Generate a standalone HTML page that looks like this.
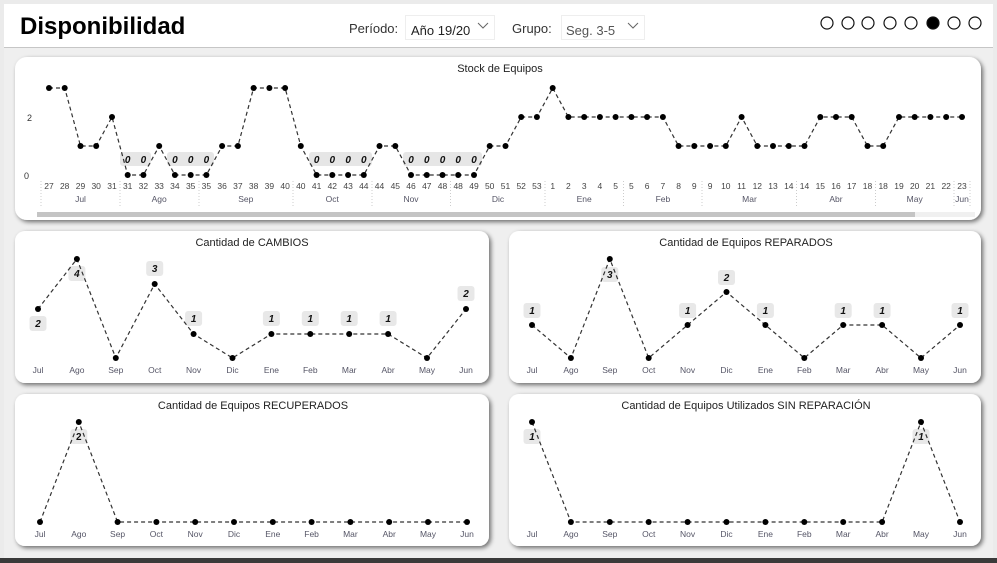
<!DOCTYPE html>
<html><head><meta charset="utf-8">
<style>
html,body{margin:0;padding:0;width:997px;height:563px;overflow:hidden;background:#e8e8e8;font-family:"Liberation Sans",sans-serif;}
svg text{font-family:"Liberation Sans",sans-serif;}
</style></head>
<body>
<svg width="997" height="563" viewBox="0 0 997 563" xmlns="http://www.w3.org/2000/svg">
<defs>
<filter id="sh" x="-5%" y="-10%" width="110%" height="125%">
<feGaussianBlur in="SourceAlpha" stdDeviation="2.5"/><feOffset dx="2" dy="2"/>
<feComponentTransfer><feFuncA type="linear" slope="0.55"/></feComponentTransfer>
<feMerge><feMergeNode/><feMergeNode in="SourceGraphic"/></feMerge></filter>
</defs>
<rect x="0" y="0" width="997" height="563" fill="#ebebeb"/>
<rect x="4" y="4" width="989" height="554" fill="#efefef"/>
<!-- header -->
<rect x="4" y="4" width="989" height="43" fill="#fff"/>
<line x1="4" y1="47.5" x2="993" y2="47.5" stroke="#c6c6c6"/>
<text x="20" y="34" font-size="24" font-weight="bold" fill="#000">Disponibilidad</text>
<text x="349" y="33" font-size="13" fill="#333">Período:</text>
<rect x="405.5" y="15.5" width="89" height="24" fill="#fff" stroke="#eee"/>
<text x="411" y="35" font-size="13" fill="#222">Año 19/20</text>
<path d="M478 23 l5 5 l5 -5" fill="none" stroke="#666"/>
<text x="512" y="33" font-size="13" fill="#333">Grupo:</text>
<rect x="561.5" y="15.5" width="83" height="24" fill="#fff" stroke="#eee"/>
<text x="566" y="35" font-size="13" fill="#555">Seg. 3-5</text>
<path d="M628 23 l5 5 l5 -5" fill="none" stroke="#666"/>
<g fill="#fff" stroke="#111" stroke-width="1.2">
<circle cx="827" cy="23" r="6"/><circle cx="848" cy="23" r="6"/><circle cx="868" cy="23" r="6"/><circle cx="890" cy="23" r="6"/><circle cx="911" cy="23" r="6"/><circle cx="933" cy="23" r="6" fill="#000"/><circle cx="954" cy="23" r="6"/><circle cx="975" cy="23" r="6"/>
</g>

<!-- cards -->
<g fill="#fff" filter="url(#sh)">
<rect x="15" y="57" width="966" height="163" rx="12"/>
<rect x="15" y="231" width="474" height="152" rx="10"/>
<rect x="509" y="231" width="472" height="152" rx="10"/>
<rect x="15" y="394" width="474" height="152" rx="10"/>
<rect x="509" y="394" width="472" height="152" rx="10"/>
</g>
<rect x="0" y="558" width="997" height="5" fill="#3a3a3a"/>

<!-- Stock chart -->
<text x="500" y="72" font-size="11" text-anchor="middle" fill="#222">Stock de Equipos</text>
<text x="27" y="121" font-size="9" fill="#333">2</text>
<text x="24" y="179" font-size="9" fill="#333">0</text>
<g fill="#e6e6e6">
<rect x="120" y="152" width="31" height="14" rx="3"/>
<rect x="167" y="152" width="47" height="14" rx="3"/>
<rect x="309" y="152" width="63" height="14" rx="3"/>
<rect x="403" y="152" width="79" height="14" rx="3"/>
</g>
<g font-size="10" font-weight="bold" font-style="italic" text-anchor="middle" fill="#111">
<text x="127.7" y="163">0</text><text x="143.4" y="163">0</text>
<text x="174.9" y="163">0</text><text x="190.7" y="163">0</text><text x="206.4" y="163">0</text>
<text x="316.6" y="163">0</text><text x="332.3" y="163">0</text><text x="348.1" y="163">0</text><text x="363.8" y="163">0</text>
<text x="411" y="163">0</text><text x="426.8" y="163">0</text><text x="442.5" y="163">0</text><text x="458.2" y="163">0</text><text x="474" y="163">0</text>
</g>
<polyline fill="none" stroke="#333" stroke-width="1.2" stroke-dasharray="4 3" points="49,88 64.7,88 80.5,146 96.2,146 112,117 127.7,175 143.4,175 159.2,146 174.9,175 190.7,175 206.4,175 222.1,146 237.9,146 253.6,88 269.4,88 285.1,88 300.8,146 316.6,175 332.3,175 348.1,175 363.8,175 379.5,146 395.3,146 411,175 426.8,175 442.5,175 458.2,175 474,175 489.7,146 505.5,146 521.2,117 536.9,117 552.7,88 568.4,117 584.2,117 599.9,117 615.6,117 631.4,117 647.1,117 662.9,117 678.6,146 694.3,146 710.1,146 725.8,146 741.6,117 757.3,146 773,146 788.8,146 804.5,146 820.3,117 836,117 851.7,117 867.5,146 883.2,146 899,117 914.7,117 930.4,117 946.2,117 962,117"/>
<g fill="#000">
<circle cx="49" cy="88" r="3"/><circle cx="64.7" cy="88" r="3"/><circle cx="80.5" cy="146" r="3"/><circle cx="96.2" cy="146" r="3"/><circle cx="112" cy="117" r="3"/><circle cx="127.7" cy="175" r="3"/><circle cx="143.4" cy="175" r="3"/><circle cx="159.2" cy="146" r="3"/><circle cx="174.9" cy="175" r="3"/><circle cx="190.7" cy="175" r="3"/><circle cx="206.4" cy="175" r="3"/><circle cx="222.1" cy="146" r="3"/><circle cx="237.9" cy="146" r="3"/><circle cx="253.6" cy="88" r="3"/><circle cx="269.4" cy="88" r="3"/><circle cx="285.1" cy="88" r="3"/><circle cx="300.8" cy="146" r="3"/><circle cx="316.6" cy="175" r="3"/><circle cx="332.3" cy="175" r="3"/><circle cx="348.1" cy="175" r="3"/><circle cx="363.8" cy="175" r="3"/><circle cx="379.5" cy="146" r="3"/><circle cx="395.3" cy="146" r="3"/><circle cx="411" cy="175" r="3"/><circle cx="426.8" cy="175" r="3"/><circle cx="442.5" cy="175" r="3"/><circle cx="458.2" cy="175" r="3"/><circle cx="474" cy="175" r="3"/><circle cx="489.7" cy="146" r="3"/><circle cx="505.5" cy="146" r="3"/><circle cx="521.2" cy="117" r="3"/><circle cx="536.9" cy="117" r="3"/><circle cx="552.7" cy="88" r="3"/><circle cx="568.4" cy="117" r="3"/><circle cx="584.2" cy="117" r="3"/><circle cx="599.9" cy="117" r="3"/><circle cx="615.6" cy="117" r="3"/><circle cx="631.4" cy="117" r="3"/><circle cx="647.1" cy="117" r="3"/><circle cx="662.9" cy="117" r="3"/><circle cx="678.6" cy="146" r="3"/><circle cx="694.3" cy="146" r="3"/><circle cx="710.1" cy="146" r="3"/><circle cx="725.8" cy="146" r="3"/><circle cx="741.6" cy="117" r="3"/><circle cx="757.3" cy="146" r="3"/><circle cx="773" cy="146" r="3"/><circle cx="788.8" cy="146" r="3"/><circle cx="804.5" cy="146" r="3"/><circle cx="820.3" cy="117" r="3"/><circle cx="836" cy="117" r="3"/><circle cx="851.7" cy="117" r="3"/><circle cx="867.5" cy="146" r="3"/><circle cx="883.2" cy="146" r="3"/><circle cx="899" cy="117" r="3"/><circle cx="914.7" cy="117" r="3"/><circle cx="930.4" cy="117" r="3"/><circle cx="946.2" cy="117" r="3"/><circle cx="962" cy="117" r="3"/>
</g>
<g font-size="8.5" fill="#444" text-anchor="middle">
<text x="49" y="189">27</text><text x="64.7" y="189">28</text><text x="80.5" y="189">29</text><text x="96.2" y="189">30</text><text x="112" y="189">31</text><text x="127.7" y="189">31</text><text x="143.4" y="189">32</text><text x="159.2" y="189">33</text><text x="174.9" y="189">34</text><text x="190.7" y="189">35</text><text x="206.4" y="189">35</text><text x="222.1" y="189">36</text><text x="237.9" y="189">37</text><text x="253.6" y="189">38</text><text x="269.4" y="189">39</text><text x="285.1" y="189">40</text><text x="300.8" y="189">40</text><text x="316.6" y="189">41</text><text x="332.3" y="189">42</text><text x="348.1" y="189">43</text><text x="363.8" y="189">44</text><text x="379.5" y="189">44</text><text x="395.3" y="189">45</text><text x="411" y="189">46</text><text x="426.8" y="189">47</text><text x="442.5" y="189">48</text><text x="458.2" y="189">48</text><text x="474" y="189">49</text><text x="489.7" y="189">50</text><text x="505.5" y="189">51</text><text x="521.2" y="189">52</text><text x="536.9" y="189">53</text><text x="552.7" y="189">1</text><text x="568.4" y="189">2</text><text x="584.2" y="189">3</text><text x="599.9" y="189">4</text><text x="615.6" y="189">5</text><text x="631.4" y="189">5</text><text x="647.1" y="189">6</text><text x="662.9" y="189">7</text><text x="678.6" y="189">8</text><text x="694.3" y="189">9</text><text x="710.1" y="189">9</text><text x="725.8" y="189">10</text><text x="741.6" y="189">11</text><text x="757.3" y="189">12</text><text x="773" y="189">13</text><text x="788.8" y="189">14</text><text x="804.5" y="189">14</text><text x="820.3" y="189">15</text><text x="836" y="189">16</text><text x="851.7" y="189">17</text><text x="867.5" y="189">18</text><text x="883.2" y="189">18</text><text x="899" y="189">19</text><text x="914.7" y="189">20</text><text x="930.4" y="189">21</text><text x="946.2" y="189">22</text><text x="962" y="189">23</text>
</g>
<g font-size="8.5" fill="#556" text-anchor="middle">
<text x="80.5" y="202">Jul</text><text x="159.2" y="202">Ago</text><text x="245.8" y="202">Sep</text><text x="332.3" y="202">Oct</text><text x="411" y="202">Nov</text><text x="498" y="202">Dic</text><text x="584.2" y="202">Ene</text><text x="662.9" y="202">Feb</text><text x="749.5" y="202">Mar</text><text x="836" y="202">Abr</text><text x="914.7" y="202">May</text><text x="962" y="202">Jun</text>
</g>
<g stroke="#ccc" stroke-dasharray="1 2">
<line x1="41" y1="181" x2="41" y2="207"/><line x1="120" y1="181" x2="120" y2="207"/><line x1="199" y1="181" x2="199" y2="207"/><line x1="293" y1="181" x2="293" y2="207"/><line x1="372" y1="181" x2="372" y2="207"/><line x1="450.5" y1="181" x2="450.5" y2="207"/><line x1="545" y1="181" x2="545" y2="207"/><line x1="623.5" y1="181" x2="623.5" y2="207"/><line x1="702" y1="181" x2="702" y2="207"/><line x1="796.5" y1="181" x2="796.5" y2="207"/><line x1="875.5" y1="181" x2="875.5" y2="207"/><line x1="954" y1="181" x2="954" y2="207"/><line x1="970" y1="181" x2="970" y2="207"/>
</g>
<rect x="37" y="212" width="938" height="5" fill="#f0f0f0"/>
<rect x="37" y="212" width="878" height="5" fill="#c4c4c4"/>

<!-- CAMBIOS -->
<text x="252" y="246" font-size="11" text-anchor="middle" fill="#222">Cantidad de CAMBIOS</text>
<g fill="#e8e8e8">
<rect x="29.5" y="316" width="17" height="15" rx="3"/><rect x="68.4" y="266" width="17" height="15" rx="3"/><rect x="146.2" y="261" width="17" height="15" rx="3"/><rect x="185.1" y="311" width="17" height="15" rx="3"/><rect x="262.9" y="311" width="17" height="15" rx="3"/><rect x="301.8" y="311" width="17" height="15" rx="3"/><rect x="340.7" y="311" width="17" height="15" rx="3"/><rect x="379.6" y="311" width="17" height="15" rx="3"/><rect x="457.5" y="286" width="17" height="15" rx="3"/>
</g>
<polyline fill="none" stroke="#333" stroke-width="1.2" stroke-dasharray="4 3" points="38,309 76.9,259 115.8,358 154.7,284 193.6,334 232.5,358 271.4,334 310.3,334 349.2,334 388.1,334 427,358 466,309"/>
<g fill="#000"><circle cx="38" cy="309" r="3"/><circle cx="76.9" cy="259" r="3"/><circle cx="115.8" cy="358" r="3"/><circle cx="154.7" cy="284" r="3"/><circle cx="193.6" cy="334" r="3"/><circle cx="232.5" cy="358" r="3"/><circle cx="271.4" cy="334" r="3"/><circle cx="310.3" cy="334" r="3"/><circle cx="349.2" cy="334" r="3"/><circle cx="388.1" cy="334" r="3"/><circle cx="427" cy="358" r="3"/><circle cx="466" cy="309" r="3"/></g>
<g font-size="10" font-weight="bold" font-style="italic" text-anchor="middle" fill="#111">
<text x="38" y="327">2</text><text x="76.9" y="277">4</text><text x="154.7" y="272">3</text><text x="193.6" y="322">1</text><text x="271.4" y="322">1</text><text x="310.3" y="322">1</text><text x="349.2" y="322">1</text><text x="388.1" y="322">1</text><text x="466" y="297">2</text>
</g>
<g font-size="8.5" fill="#556" text-anchor="middle">
<text x="38" y="373">Jul</text><text x="76.9" y="373">Ago</text><text x="115.8" y="373">Sep</text><text x="154.7" y="373">Oct</text><text x="193.6" y="373">Nov</text><text x="232.5" y="373">Dic</text><text x="271.4" y="373">Ene</text><text x="310.3" y="373">Feb</text><text x="349.2" y="373">Mar</text><text x="388.1" y="373">Abr</text><text x="427" y="373">May</text><text x="466" y="373">Jun</text>
</g>

<!-- REPARADOS -->
<text x="746" y="246" font-size="11" text-anchor="middle" fill="#222">Cantidad de Equipos REPARADOS</text>
<g fill="#e8e8e8">
<rect x="523.5" y="303" width="17" height="15" rx="3"/><rect x="601.3" y="267" width="17" height="15" rx="3"/><rect x="679.1" y="303" width="17" height="15" rx="3"/><rect x="718" y="270" width="17" height="15" rx="3"/><rect x="756.9" y="303" width="17" height="15" rx="3"/><rect x="834.7" y="303" width="17" height="15" rx="3"/><rect x="873.6" y="303" width="17" height="15" rx="3"/><rect x="951.5" y="303" width="17" height="15" rx="3"/>
</g>
<polyline fill="none" stroke="#333" stroke-width="1.2" stroke-dasharray="4 3" points="532,325 570.9,358 609.8,259 648.7,358 687.6,325 726.5,292 765.4,325 804.3,358 843.2,325 882.1,325 921,358 960,325"/>
<g fill="#000"><circle cx="532" cy="325" r="3"/><circle cx="570.9" cy="358" r="3"/><circle cx="609.8" cy="259" r="3"/><circle cx="648.7" cy="358" r="3"/><circle cx="687.6" cy="325" r="3"/><circle cx="726.5" cy="292" r="3"/><circle cx="765.4" cy="325" r="3"/><circle cx="804.3" cy="358" r="3"/><circle cx="843.2" cy="325" r="3"/><circle cx="882.1" cy="325" r="3"/><circle cx="921" cy="358" r="3"/><circle cx="960" cy="325" r="3"/></g>
<g font-size="10" font-weight="bold" font-style="italic" text-anchor="middle" fill="#111">
<text x="532" y="314">1</text><text x="609.8" y="278">3</text><text x="687.6" y="314">1</text><text x="726.5" y="281">2</text><text x="765.4" y="314">1</text><text x="843.2" y="314">1</text><text x="882.1" y="314">1</text><text x="960" y="314">1</text>
</g>
<g font-size="8.5" fill="#556" text-anchor="middle">
<text x="532" y="373">Jul</text><text x="570.9" y="373">Ago</text><text x="609.8" y="373">Sep</text><text x="648.7" y="373">Oct</text><text x="687.6" y="373">Nov</text><text x="726.5" y="373">Dic</text><text x="765.4" y="373">Ene</text><text x="804.3" y="373">Feb</text><text x="843.2" y="373">Mar</text><text x="882.1" y="373">Abr</text><text x="921" y="373">May</text><text x="960" y="373">Jun</text>
</g>

<!-- RECUPERADOS -->
<text x="253" y="409" font-size="11" text-anchor="middle" fill="#222">Cantidad de Equipos RECUPERADOS</text>
<rect x="70.3" y="429" width="17" height="15" rx="3" fill="#e8e8e8"/>
<polyline fill="none" stroke="#333" stroke-width="1.2" stroke-dasharray="4 3" points="40,522 78.8,422 117.6,522 467,522"/>
<g fill="#000"><circle cx="40" cy="522" r="3"/><circle cx="78.8" cy="422" r="3"/><circle cx="117.6" cy="522" r="3"/><circle cx="156.4" cy="522" r="3"/><circle cx="195.2" cy="522" r="3"/><circle cx="234" cy="522" r="3"/><circle cx="272.8" cy="522" r="3"/><circle cx="311.6" cy="522" r="3"/><circle cx="350.4" cy="522" r="3"/><circle cx="389.2" cy="522" r="3"/><circle cx="428" cy="522" r="3"/><circle cx="467" cy="522" r="3"/></g>
<text x="78.8" y="440" font-size="10" font-weight="bold" text-anchor="middle" fill="#111">2</text>
<g font-size="8.5" fill="#556" text-anchor="middle">
<text x="40" y="537">Jul</text><text x="78.8" y="537">Ago</text><text x="117.6" y="537">Sep</text><text x="156.4" y="537">Oct</text><text x="195.2" y="537">Nov</text><text x="234" y="537">Dic</text><text x="272.8" y="537">Ene</text><text x="311.6" y="537">Feb</text><text x="350.4" y="537">Mar</text><text x="389.2" y="537">Abr</text><text x="428" y="537">May</text><text x="467" y="537">Jun</text>
</g>

<!-- SIN REPARACION -->
<text x="746" y="409" font-size="11" text-anchor="middle" fill="#222">Cantidad de Equipos Utilizados SIN REPARACIÓN</text>
<rect x="523.5" y="429" width="17" height="15" rx="3" fill="#e8e8e8"/>
<rect x="912.5" y="429" width="17" height="15" rx="3" fill="#e8e8e8"/>
<polyline fill="none" stroke="#333" stroke-width="1.2" stroke-dasharray="4 3" points="532,422 570.9,522 882.1,522 921,422 960,522"/>
<g fill="#000"><circle cx="532" cy="422" r="3"/><circle cx="570.9" cy="522" r="3"/><circle cx="609.8" cy="522" r="3"/><circle cx="648.7" cy="522" r="3"/><circle cx="687.6" cy="522" r="3"/><circle cx="726.5" cy="522" r="3"/><circle cx="765.4" cy="522" r="3"/><circle cx="804.3" cy="522" r="3"/><circle cx="843.2" cy="522" r="3"/><circle cx="882.1" cy="522" r="3"/><circle cx="921" cy="422" r="3"/><circle cx="960" cy="522" r="3"/></g>
<g font-size="10" font-weight="bold" font-style="italic" text-anchor="middle" fill="#111">
<text x="532" y="440">1</text><text x="921" y="440">1</text>
</g>
<g font-size="8.5" fill="#556" text-anchor="middle">
<text x="532" y="537">Jul</text><text x="570.9" y="537">Ago</text><text x="609.8" y="537">Sep</text><text x="648.7" y="537">Oct</text><text x="687.6" y="537">Nov</text><text x="726.5" y="537">Dic</text><text x="765.4" y="537">Ene</text><text x="804.3" y="537">Feb</text><text x="843.2" y="537">Mar</text><text x="882.1" y="537">Abr</text><text x="921" y="537">May</text><text x="960" y="537">Jun</text>
</g>
</svg>
</body></html>
